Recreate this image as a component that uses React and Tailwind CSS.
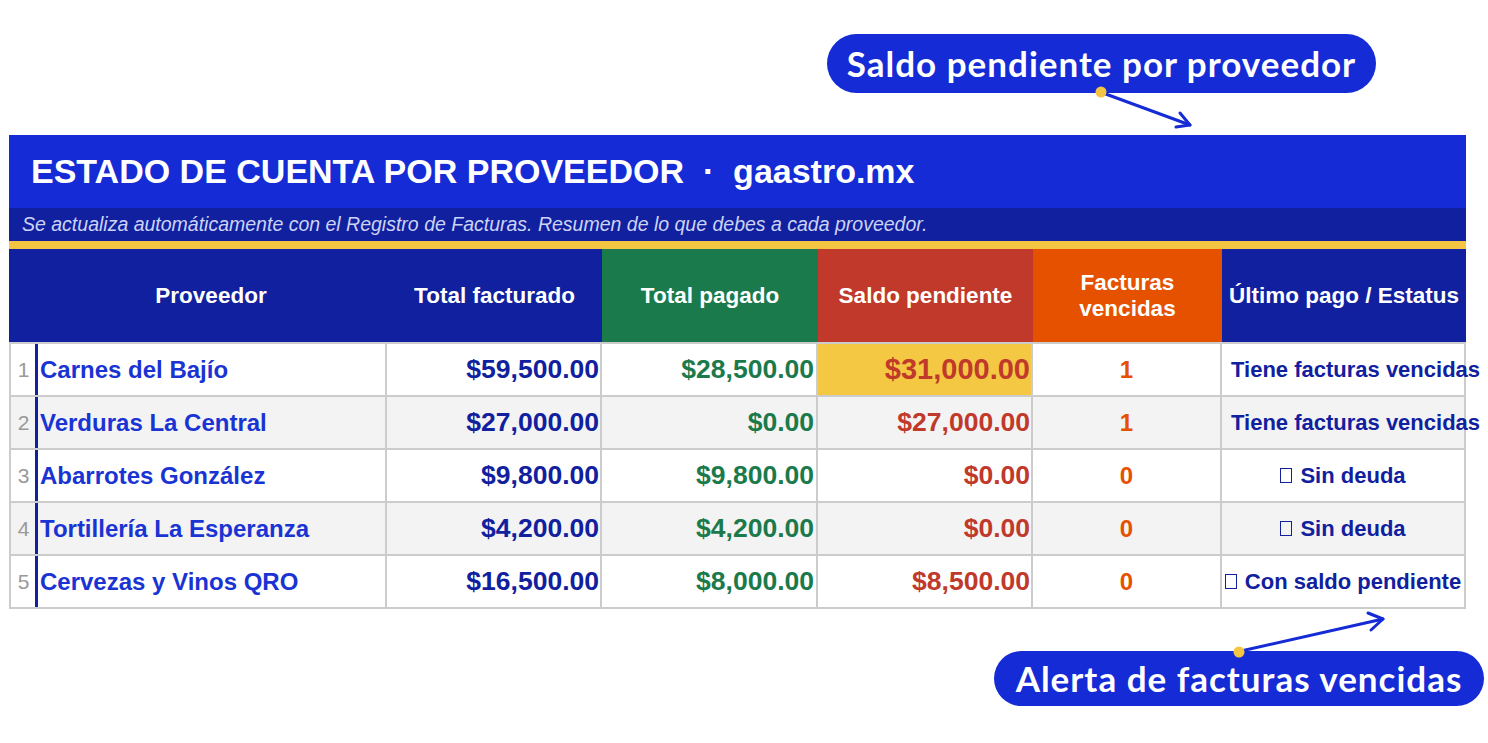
const rows = [
  {
    n: 1,
    name: "Carnes del Bajío",
    billed: "$59,500.00",
    paid: "$28,500.00",
    due: "$31,000.00",
    overdue: 1,
    status: "Tiene facturas vencidas",
    alert: true,
    highlight: true,
  },
  {
    n: 2,
    name: "Verduras La Central",
    billed: "$27,000.00",
    paid: "$0.00",
    due: "$27,000.00",
    overdue: 1,
    status: "Tiene facturas vencidas",
    alert: true,
  },
  {
    n: 3,
    name: "Abarrotes González",
    billed: "$9,800.00",
    paid: "$9,800.00",
    due: "$0.00",
    overdue: 0,
    status: "Sin deuda",
  },
  {
    n: 4,
    name: "Tortillería La Esperanza",
    billed: "$4,200.00",
    paid: "$4,200.00",
    due: "$0.00",
    overdue: 0,
    status: "Sin deuda",
  },
  {
    n: 5,
    name: "Cervezas y Vinos QRO",
    billed: "$16,500.00",
    paid: "$8,000.00",
    due: "$8,500.00",
    overdue: 0,
    status: "Con saldo pendiente",
  },
];

const cols = "grid grid-cols-[26px_352px_215px_216px_215px_189px_244px]";

const Callout = ({ children, className }) => (
  <div
    className={`inline-flex items-center justify-center rounded-full bg-[#152bd6] text-white font-['Lato',sans-serif] font-bold tracking-[1px] ${className}`}
  >
    {children}
  </div>
);

const Tofu = () => (
  <span className="inline-block w-[12px] h-[15px] border border-[#10209e] mr-[8px]" />
);

const Row = ({ row, odd }) => (
  <div className={`${cols} h-[53px] border-b-2 border-[#cccccc] ${odd ? "bg-[#f3f3f3]" : "bg-white"}`}>
    <div className="flex items-center justify-center border-l-2 border-[#cccccc] text-[21px] text-[#999999] pl-[1px]">
      {row.n}
    </div>
    <div className="flex items-center border-l-[3px] border-[#10209e] border-r-2 border-r-[#cccccc] pl-[2px] text-[24px] font-bold text-[#1a33d3] whitespace-nowrap">
      {row.name}
    </div>
    <div className="flex items-center justify-end border-r-2 border-[#cccccc] pr-[1px] text-[26.5px] font-bold text-[#10209e]">
      {row.billed}
    </div>
    <div className="flex items-center justify-end border-r-2 border-[#cccccc] pr-[2px] text-[26.5px] font-bold text-[#1b7a4b]">
      {row.paid}
    </div>
    <div
      className={`flex items-center justify-end border-r-2 border-[#cccccc] pr-[1px] font-bold text-[#c0392b] ${
        row.highlight ? "bg-[#f4c842] text-[29px]" : "text-[26.5px]"
      }`}
    >
      {row.due}
    </div>
    <div className="flex items-center justify-center border-r-2 border-[#cccccc] text-[24px] font-bold text-[#e65100]">
      {row.overdue}
    </div>
    {row.alert ? (
      <div className="flex items-center border-r-2 border-[#cccccc] pl-[2px] text-[22px] font-bold text-[#10209e] whitespace-nowrap">
        <span className="w-px h-[16px] bg-[#9aa0c8] mr-[7px]" />
        {row.status}
      </div>
    ) : (
      <div className="flex items-center justify-center border-r-2 border-[#cccccc] text-[22px] font-bold text-[#10209e] whitespace-nowrap">
        <Tofu />
        {row.status}
      </div>
    )}
  </div>
);

export default function App() {
  return (
    <div className="relative w-[1488px] h-[743px] bg-white overflow-hidden font-['Liberation_Sans',Arial,sans-serif]">
      <div className="h-[135px] pt-[34px] pl-[827px]">
        <Callout className="w-[549px] h-[59px] text-[35px]">Saldo pendiente por proveedor</Callout>
      </div>

      <div className="ml-[9px] w-[1457px]">
        <div className="h-[73px] bg-[#152bd6] flex items-center pl-[22px] text-white text-[34px] font-bold whitespace-pre">
          ESTADO DE CUENTA POR PROVEEDOR{"  ·  "}gaastro.mx
        </div>
        <div className="h-[33px] bg-[#10209e] flex items-center pl-[13px] text-[19.5px] italic text-[#cdd3f5]">
          Se actualiza automáticamente con el Registro de Facturas. Resumen de lo que debes a cada proveedor.
        </div>
        <div className="h-[8px] bg-[#f4c542]" />

        <div className={`${cols} h-[95px] text-white text-[22.5px] font-bold leading-[26px] text-center border-b-2 border-[#cccccc]`}>
          <div className="bg-[#10209e]" />
          <div className="bg-[#10209e] flex items-center justify-center">Proveedor</div>
          <div className="bg-[#10209e] flex items-center justify-center">Total facturado</div>
          <div className="bg-[#1b7a4b] flex items-center justify-center">Total pagado</div>
          <div className="bg-[#c0392b] flex items-center justify-center">Saldo pendiente</div>
          <div className="bg-[#e65100] flex items-center justify-center">
            Facturas
            <br />
            vencidas
          </div>
          <div className="bg-[#10209e] flex items-center justify-center whitespace-nowrap">
            Último pago / Estatus
          </div>
        </div>

        {rows.map((row, i) => (
          <Row key={row.n} row={row} odd={i % 2 === 1} />
        ))}
      </div>

      <div className="pt-[42px] pl-[994px]">
        <Callout className="w-[490px] h-[55px] text-[35px]">Alerta de facturas vencidas</Callout>
      </div>

      <svg className="absolute inset-0 pointer-events-none" width="1488" height="743">
        <g stroke="#152bd6" strokeWidth="3" fill="none" strokeLinecap="round" strokeLinejoin="round">
          <line x1="1103" y1="93" x2="1190" y2="125" />
          <polyline points="1180,113 1190,125 1176,127" />
          <line x1="1241" y1="651" x2="1383" y2="619" />
          <polyline points="1368,613 1383,619 1371,630" />
        </g>
        <circle cx="1101" cy="92" r="5.5" fill="#f4c542" />
        <circle cx="1239" cy="652" r="5.5" fill="#f4c542" />
      </svg>
    </div>
  );
}
